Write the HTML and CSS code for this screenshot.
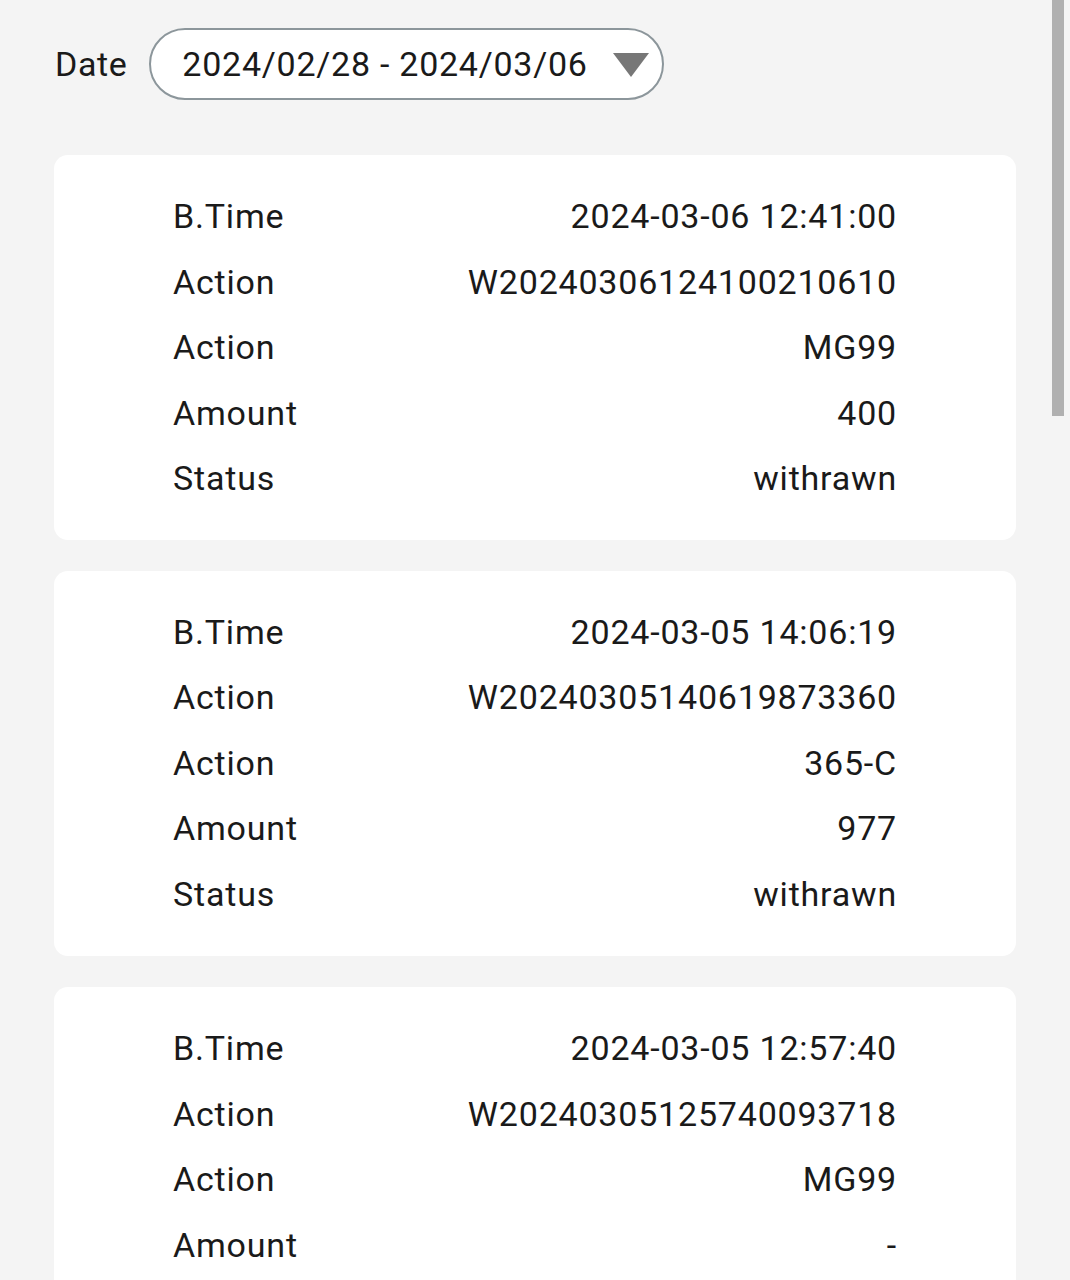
FILE: index.html
```html
<!DOCTYPE html>
<html>
<head>
<meta charset="utf-8">
<link rel="stylesheet" href="styles.css">
</head>
<body>
<div class="page">
  <div class="filter">
    <span class="filter-label">Date</span>
    <div class="select">
      <span class="select-text">2024/02/28 - 2024/03/06</span>
      <svg class="caret" width="36" height="24" viewBox="0 0 36 24"><path d="M0 0 H36 L18 24 Z" fill="#777"/></svg>
    </div>
  </div>
  <div class="list">
    <div class="card">
      <div class="row"><span>B.Time</span><span>2024-03-06 12:41:00</span></div>
      <div class="row"><span>Action</span><span>W20240306124100210610</span></div>
      <div class="row"><span>Action</span><span>MG99</span></div>
      <div class="row"><span>Amount</span><span>400</span></div>
      <div class="row"><span>Status</span><span>withrawn</span></div>
    </div>
    <div class="card">
      <div class="row"><span>B.Time</span><span>2024-03-05 14:06:19</span></div>
      <div class="row"><span>Action</span><span>W20240305140619873360</span></div>
      <div class="row"><span>Action</span><span>365-C</span></div>
      <div class="row"><span>Amount</span><span>977</span></div>
      <div class="row"><span>Status</span><span>withrawn</span></div>
    </div>
    <div class="card">
      <div class="row"><span>B.Time</span><span>2024-03-05 12:57:40</span></div>
      <div class="row"><span>Action</span><span>W20240305125740093718</span></div>
      <div class="row"><span>Action</span><span>MG99</span></div>
      <div class="row"><span>Amount</span><span>-</span></div>
    </div>
  </div>
</div>
<div class="scrollbar"></div>
</body>
</html>
```
FILE: styles.css
```css
html, body {
  margin: 0;
  padding: 0;
  background: #f4f4f4;
  height: 1280px;
  overflow: hidden;
}
body {
  font-family: Roboto, "Liberation Sans", sans-serif;
  color: #1a1a1a;
}
.page {
  padding: 28px 54px 0 54px;
  width: 962px;
}
.filter {
  display: flex;
  align-items: center;
  gap: 22px;
}
.filter-label {
  font-size: 34px;
  letter-spacing: 0.6px;
  margin-left: 1px;
}
.select {
  box-sizing: border-box;
  width: 515px;
  height: 72px;
  border: 2px solid #8c969b;
  border-radius: 36px;
  background: #fff;
  display: flex;
  align-items: center;
  padding: 0 13px 0 31px;
  justify-content: space-between;
}
.select-text {
  font-size: 34px;
  letter-spacing: 0.75px;
}
.caret {
  margin-top: 1px;
}
.list {
  margin-top: 55px;
  display: flex;
  flex-direction: column;
  gap: 31px;
}
.card {
  background: #fff;
  border-radius: 14px;
  padding: 29px 119px 60px 119px;
}
.card + .card {
  padding-bottom: 29px;
}
.list .card:first-child {
  padding-bottom: 28px;
}
.row {
  display: flex;
  justify-content: space-between;
  font-size: 34px;
  letter-spacing: 0.8px;
  height: 65.5px;
  line-height: 65.5px;
}
.scrollbar {
  position: fixed;
  top: 0;
  left: 1052px;
  width: 12px;
  height: 416px;
  background: #b0b0b0;
}
```
